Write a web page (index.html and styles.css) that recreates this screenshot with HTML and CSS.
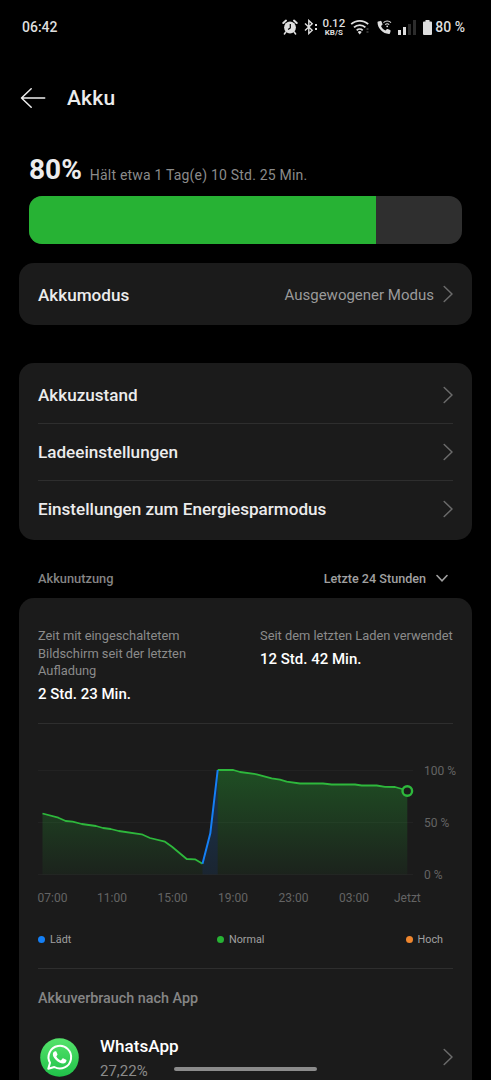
FILE: index.html
```html
<!DOCTYPE html>
<html lang="de">
<head>
<meta charset="utf-8">
<title>Akku</title>
<link rel="stylesheet" href="styles.css">
</head>
<body>
<div class="screen">
  <header class="status">
    <span class="clock">06:42</span>
    <div class="status-icons">
      <svg class="i-alarm" width="16" height="16" viewBox="0 0 16 16"><circle cx="8" cy="8.5" r="5.9" fill="#dedede"/><path d="M1.300 4 4 1.600M14.700 4 12 1.600" stroke="#dedede" stroke-width="2" stroke-linecap="round"/><path d="M3.8 13 2.4 15M12.2 13l1.4 2" stroke="#dedede" stroke-width="1.5" stroke-linecap="round"/><path d="M8.3 5v4l-2.2 1.6" stroke="#000" stroke-width="1.2" fill="none"/></svg>
      <svg class="i-bt" width="14" height="16" viewBox="0 0 14 16"><path d="M1 4.5 8.2 11.3 4.8 14.5V1.5L8.2 4.7 1 11.5" fill="none" stroke="#dedede" stroke-width="1.4"/><path d="M12 5v2M12 9v2" stroke="#dedede" stroke-width="2"/></svg>
      <div class="speed"><b>0.12</b><small>KB/S</small></div>
      <svg class="i-wifi" width="20" height="16" viewBox="0 0 20 16"><path d="M1.2 5.2a12.3 12.3 0 0 1 17 0M4 8.4a8.2 8.2 0 0 1 11.4 0M6.7 11.3a4.3 4.3 0 0 1 6 0" fill="none" stroke="#dedede" stroke-width="1.8"/><path d="M7.7 13 9.7 15.4 11.7 13a3 3 0 0 0-4 0z" fill="#dedede"/><path d="M17.5 9v2M17.5 12v2" stroke="#333" stroke-width="2"/></svg>
      <svg class="i-call" width="15" height="15" viewBox="0 0 15 15"><path d="M1.2 1.4 3.5.9c.5-.1.8.1 1 .5l1 2.5c.1.4 0 .8-.3 1L4 6c.9 2 2.4 3.5 4.5 4.5l1.2-1.3c.3-.3.6-.4 1-.2l2.4 1c.4.2.6.6.5 1l-.6 2.2c-.1.4-.4.7-.9.7C6 14 .6 8.500.5 2.300c0-.5.2-.8.7-.9z" fill="#dedede"/><path d="M6.500 2.600a5.300 5.300 0 0 1 7.500 0M8.200 4.700a2.900 2.900 0 0 1 4 0" fill="none" stroke="#dedede" stroke-width="1.100"/><circle cx="10.200" cy="6.300" r=".9" fill="#dedede"/></svg>
      <svg class="i-signal" width="18" height="16" viewBox="0 0 18 16"><path d="M0 11h3v5H0zM5 8h3v8H5z" fill="#dedede"/><path d="M10 5h3v11h-3zM15 1h3v15h-3z" fill="#2c2c2c"/></svg>
      <svg class="i-batt" width="9" height="15" viewBox="0 0 9 15"><path d="M2.500 0h4v1.500H8a1 1 0 0 1 1 1V14a1 1 0 0 1-1 1H1a1 1 0 0 1-1-1V2.500a1 1 0 0 1 1-1h1.500z" fill="#dedede"/></svg>
      <span class="percent">80 %</span>
    </div>
  </header>

  <div class="titlebar">
    <svg width="26" height="22" viewBox="0 0 26 22"><path d="M11.200 1.700 1.500 11l9.700 9.300M1.500 11H24.700" fill="none" stroke="#eee" stroke-width="1.500" stroke-linecap="round" stroke-linejoin="round"/></svg>
    <h1>Akku</h1>
  </div>

  <section class="level">
    <div class="level-text"><strong>80%</strong><span>Hält etwa 1 Tag(e) 10 Std. 25 Min.</span></div>
    <div class="bar"><div class="fill" style="width:80.200%"></div></div>
  </section>

  <section class="card mode">
    <div class="row"><span class="name">Akkumodus</span><span class="value">Ausgewogener Modus</span><svg class="chev" viewBox="0 0 10 18"><path d="M1.200 1.500 9 9l-7.800 7.500"/></svg></div>
  </section>

  <section class="card list">
    <div class="row"><span class="name">Akkuzustand</span><svg class="chev" viewBox="0 0 10 18"><path d="M1.200 1.500 9 9l-7.800 7.500"/></svg></div>
    <div class="row"><span class="name">Ladeeinstellungen</span><svg class="chev" viewBox="0 0 10 18"><path d="M1.200 1.500 9 9l-7.800 7.500"/></svg></div>
    <div class="row"><span class="name">Einstellungen zum Energiesparmodus</span><svg class="chev" viewBox="0 0 10 18"><path d="M1.200 1.500 9 9l-7.800 7.500"/></svg></div>
  </section>

  <div class="usage-head">
    <span>Akkunutzung</span>
    <span class="range">Letzte 24 Stunden</span>
    <svg width="12" height="9" viewBox="0 0 12 9"><path d="M1 1.500 6 6.800 11 1.500" fill="none" stroke="#a0a0a0" stroke-width="1.600" stroke-linecap="round"/></svg>
  </div>

  <section class="card usage">
    <div class="stats">
      <div class="stat"><p>Zeit mit eingeschaltetem<br>Bildschirm seit der letzten<br>Aufladung</p><strong>2 Std. 23 Min.</strong></div>
      <div class="stat"><p>Seit dem letzten Laden verwendet</p><strong>12 Std. 42 Min.</strong></div>
    </div>
    <svg class="chart" width="453" height="186" viewBox="0 0 453 186">
      <defs>
        <linearGradient id="g" gradientUnits="userSpaceOnUse" x1="0" y1="46" x2="0" y2="151"><stop offset="0" stop-color="#27b234" stop-opacity=".34"/><stop offset="1" stop-color="#27b234" stop-opacity=".05"/></linearGradient>
        <linearGradient id="b" gradientUnits="userSpaceOnUse" x1="0" y1="46" x2="0" y2="151"><stop offset="0" stop-color="#147ff5" stop-opacity=".25"/><stop offset="1" stop-color="#147ff5" stop-opacity=".1"/></linearGradient>
      </defs>
      <path class="grid" d="M19 46.500H394M19 98.500H394M19 150.500H394"/>
      <path fill="url(#g)" d="M23.500 150.500V89.500L39.300 93.700 46.700 97 53.700 97.700 62.700 100 77 102 84 104 91.700 105 99.700 107 122.700 110.300 131 114 146 117.700 153 122.700 167.700 135 176 135.300 183.500 139.700V150.500z"/>
      <path fill="url(#b)" d="M183.500 150.500V139.700L191.300 109.300 198.700 46V150.500z"/>
      <path fill="url(#g)" d="M198.700 150.500V46H214.300L221 48 237.700 50.300 252.700 54.300 261 55.700 267.700 57.600 281 59.500H304L312.700 60.500H336L342.700 61.500H357.700L366 62.800 376 63 388.300 66.500V150.500z"/>
      <path class="line" d="M23.500 89.500 39.300 93.700 46.700 97 53.700 97.700 62.700 100 77 102 84 104 91.700 105 99.700 107 122.700 110.300 131 114 146 117.700 153 122.700 167.700 135 176 135.300 183.500 139.700"/>
      <path class="line" d="M198.700 46H214.300L221 48 237.700 50.300 252.700 54.300 261 55.700 267.700 57.600 281 59.500H304L312.700 60.500H336L342.700 61.500H357.700L366 62.800 376 63 388.300 66.500"/>
      <path class="line charging" d="M183.500 139.700 191.300 109.300 198.700 46"/>
      <circle cx="388.300" cy="67" r="4.800" fill="#1b1b1b" stroke="#2eb83c" stroke-width="2.400"/>
      <g class="axis"><text x="405" y="51">100 %</text><text x="405" y="103">50 %</text><text x="405" y="155">0 %</text>
      <text x="18.500" y="178">07:00</text><text x="78" y="178">11:00</text><text x="138.500" y="178">15:00</text><text x="199" y="178">19:00</text><text x="259.500" y="178">23:00</text><text x="320" y="178">03:00</text><text x="375" y="178">Jetzt</text></g>
    </svg>
    <div class="legend"><span><i class="blue"></i>Lädt</span><span><i class="green"></i>Normal</span><span><i class="orange"></i>Hoch</span></div>
    <h2>Akkuverbrauch nach App</h2>
    <div class="app">
      <svg class="logo" width="39" height="39" viewBox="0 0 39 39"><defs><linearGradient id="w" x1="0" y1="0" x2="0" y2="1"><stop offset="0" stop-color="#55e36b"/><stop offset="1" stop-color="#20c149"/></linearGradient></defs><circle cx="19.500" cy="19.500" r="19.300" fill="url(#w)"/><path d="m8.300 30.700 1.700-6A11.300 11.300 0 1 1 14.300 29z" fill="none" stroke="#fff" stroke-width="2" stroke-linejoin="round"/><path d="M15.200 13.200c.5-.1 1 0 1.200.5l1.100 2.500c.2.500-.9 1.700-1.200 2 .9 2 2.500 3.500 4.600 4.300l1.600-1.900c.3-.4.7-.3 1-.2l2.600 1.300c.4.200.5.400.4.900-.2 1.800-1.700 2.900-3.400 2.900-2.100 0-5.400-1.500-7.600-4-2.200-2.400-3-4.400-2.500-6.200.3-1.100 1.200-2.100 2.200-2.100z" fill="#fff"/></svg>
      <div class="app-text"><b>WhatsApp</b><span>27,22%</span></div>
      <svg class="chev" viewBox="0 0 10 18"><path d="M1.200 1.500 9 9l-7.800 7.500"/></svg>
    </div>
  </section>
  <div class="home"></div>
</div>
</body>
</html>
```
FILE: styles.css
```css
* { box-sizing: border-box; }
body { margin: 0; background: #000; }
svg { display: block; flex: none; }
.screen {
  position: relative;
  width: 491px;
  height: 1080px;
  overflow: hidden;
  background: #000;
  color: #ececec;
  font-family: Roboto, "Liberation Sans", sans-serif;
  white-space: nowrap;
}
.status {
  height: 54px;
  padding: 0 26px 0 22px;
  display: flex;
  align-items: center;
  justify-content: space-between;
  font-size: 14px;
  font-weight: 500;
  color: #dedede;
}
.status-icons { display: flex; align-items: center; }
.i-bt { margin-left: 6px; }
.speed { width: 21px; margin-left: 5px; display: flex; flex-direction: column; align-items: center; }
.speed b { font-size: 11.500px; line-height: 11px; font-weight: 500; }
.speed small { font-size: 8px; line-height: 8px; font-weight: 700; }
.i-wifi { margin-left: 6px; }
.i-call { margin-left: 7px; }
.i-signal { margin-left: 6px; }
.i-batt { margin-left: 7px; }
.percent { margin-left: 3px; }

.titlebar { height: 88px; padding-left: 20px; display: flex; align-items: center; gap: 21px; }
h1 { margin: 0; font-size: 21px; font-weight: 500; letter-spacing: .2px; }

.level { padding: 10px 29px 0; }
.level-text { height: 44px; display: flex; align-items: flex-start; gap: 8px; }
.level-text strong { font-size: 28px; line-height: 36px; font-weight: 700; }
.level-text span { padding-top: 15px; font-size: 14px; line-height: 16px; color: #8b8b8b; letter-spacing: .2px; }
.bar { height: 48px; border-radius: 13px; background: #2f2f2f; overflow: hidden; }
.fill { height: 100%; background: #27b234; }

.card { margin: 0 19px; border-radius: 15px; background: #1b1b1b; }
.mode { margin-top: 19px; height: 62px; padding: 0 19px; }
.mode .row { height: 62px; }
.mode .name, .mode .value { padding-top: 1px; }
.list { margin-top: 38px; height: 177px; padding: 3px 19px; }
.row { height: 57px; display: flex; align-items: center; }
.list .row + .row { border-top: 1px solid #2e2e2e; }
.name { font-size: 17.100px; font-weight: 500; margin-right: auto; }
.value { font-size: 15px; color: #9a9a9a; margin-right: 9px; }
.chev { width: 10px; height: 18px; fill: none; stroke: #6b6b6b; stroke-width: 1.500; stroke-linecap: round; stroke-linejoin: round; }

.usage-head { height: 58px; padding: 19px 43px 0 38px; display: flex; align-items: center; font-size: 12.800px; font-weight: 500; color: #858585; }
.range { margin-left: auto; margin-right: 10px; font-size: 12.600px; color: #a0a0a0; }

.usage { height: 500px; border-radius: 15px 15px 0 0; }
.stats { margin: 0 19px; height: 126px; padding-top: 29px; display: grid; grid-template-columns: 222px 1fr; border-bottom: 1px solid #2e2e2e; }
.stat p { margin: 0 0 4px; font-size: 12.850px; line-height: 17.500px; color: #8b8b8b; }
.stat strong { display: block; font-size: 15px; line-height: 20px; font-weight: 500; color: #fff; }
.grid { stroke: #222; fill: none; }
.line { fill: none; stroke: #2eb83c; stroke-width: 1.800; stroke-linejoin: round; }
.charging { stroke: #147ff5; stroke-width: 2; }
.axis { fill: #646464; font-size: 12px; }

.legend { margin: 0 19px; height: 59px; padding: 0 10px 0 0; display: grid; grid-template-columns: 179px 1fr auto; align-items: center; border-bottom: 1px solid #2e2e2e; font-size: 10.800px; color: #a0a0a0; }
.legend span { display: flex; align-items: center; gap: 5px; }
.legend i { width: 7px; height: 7px; border-radius: 50%; }
.blue { background: #147ff5; }
.green { background: #27b234; }
.orange { background: #ef862e; }
h2 { margin: 0 19px; height: 58px; line-height: 60px; font-size: 14.350px; font-weight: 500; color: #858585; }
.app { padding: 0 19px 0 21px; display: flex; align-items: center; height: 60px; }
.app-text { flex: 1; align-self: flex-start; margin: 7px 0 0 21px; display: flex; flex-direction: column; gap: 4px; }
.app-text b { font-size: 17.100px; line-height: 24px; font-weight: 500; color: #fff; }
.app-text span { font-size: 15px; line-height: 18px; color: #8b8b8b; }
.home { position: absolute; left: 174px; top: 1067px; width: 143px; height: 4px; border-radius: 2px; background: #8b8b8b; }
```
